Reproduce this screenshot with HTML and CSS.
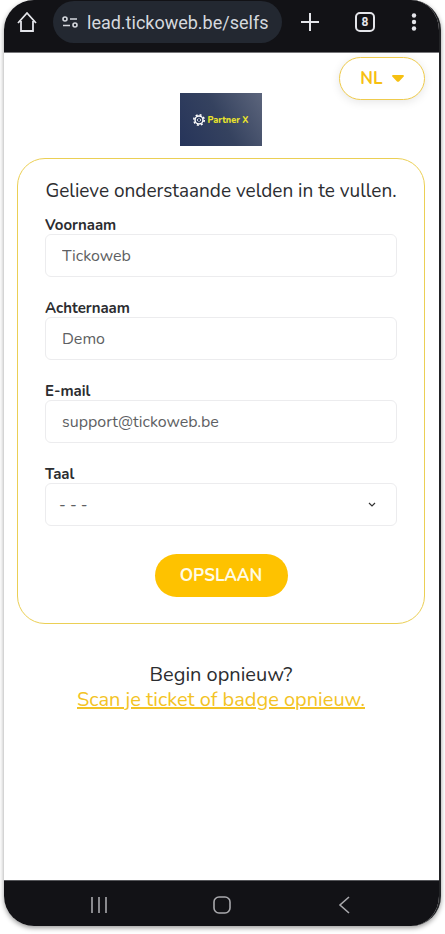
FILE: index.html
```html
<!DOCTYPE html>
<html lang="nl">
<head>
    <meta charset="UTF-8">
    <meta name="viewport" content="width=device-width, initial-scale=1.0">
    <title>Partner X</title>
    <link rel="stylesheet" href="styles.css">
</head>
<body>
    <div class="phone">
        <header class="browser-bar">
            <button type="button" class="icon-button" aria-label="Home">
                <svg width="20" height="22" viewBox="0 0 20 22" fill="none" stroke="#e4e5ea" stroke-width="1.8">
                    <path d="M1 12 L10 2 L19 12 M4 10 V20 H16 V10"/>
                </svg>
            </button>
            <div class="address">
                <svg width="16" height="12" viewBox="0 0 16 12" fill="none" stroke="#d5d8de" stroke-width="1.6">
                    <circle cx="3" cy="3" r="2"/>
                    <path d="M8 3 H15 M1 9.5 H8"/>
                    <circle cx="13" cy="9" r="2"/>
                </svg>
                <input type="text" class="address-input" aria-label="Adres" value="lead.tickoweb.be/selfs">
            </div>
            <div class="browser-actions">
                <button type="button" class="icon-button" aria-label="Nieuw tabblad">
                    <svg width="18" height="18" viewBox="0 0 18 18" stroke="#e4e5ea" stroke-width="2">
                        <path d="M9 0 V18 M0 9 H18"/>
                    </svg>
                </button>
                <button type="button" class="tab-count" aria-label="8 tabbladen">8</button>
                <button type="button" class="icon-button" aria-label="Menu">
                    <svg width="6" height="18" viewBox="0 0 6 18" fill="#e4e5ea">
                        <circle cx="3" cy="2.5" r="2.2"/>
                        <circle cx="3" cy="9" r="2.2"/>
                        <circle cx="3" cy="15.5" r="2.2"/>
                    </svg>
                </button>
            </div>
        </header>

        <main class="page">
            <div class="page-top">
                <div class="logo">
                    <svg width="12" height="12" viewBox="0 0 24 24" fill="none" stroke="#ffffff">
                        <circle cx="12" cy="12" r="8" stroke-width="3"/>
                        <circle cx="12" cy="12" r="10.5" stroke-width="3" stroke-dasharray="4 4.25"/>
                        <path d="M11 9 L8 12 L11 15 M13 9 L16 12 L13 15" stroke-width="1.5"/>
                    </svg>
                    <span>Partner X</span>
                </div>
                <button type="button" class="language">
                    NL
                    <svg width="12" height="7" viewBox="0 0 12 7" fill="#f6c012">
                        <path d="M1 0 H11 Q12.5 0.5 11.5 1.8 L7 6.4 Q6 7.2 5 6.4 L0.5 1.8 Q-0.5 0.5 1 0 Z"/>
                    </svg>
                </button>
            </div>

            <form class="card">
                <h1>Gelieve onderstaande velden in te vullen.</h1>
                <div class="field">
                    <label for="firstname">Voornaam</label>
                    <input type="text" id="firstname" value="Tickoweb">
                </div>
                <div class="field">
                    <label for="lastname">Achternaam</label>
                    <input type="text" id="lastname" value="Demo">
                </div>
                <div class="field">
                    <label for="email">E-mail</label>
                    <input type="email" id="email" value="support@tickoweb.be">
                </div>
                <div class="field">
                    <label for="language">Taal</label>
                    <select id="language">
                        <option>- - -</option>
                    </select>
                </div>
                <button type="submit" class="save">OPSLAAN</button>
            </form>

            <div class="restart">
                <p>Begin opnieuw?</p>
                <a href="#">Scan je ticket of badge opnieuw.</a>
            </div>
        </main>

        <nav class="system-bar">
            <button type="button" class="icon-button" aria-label="Recente apps">
                <svg width="18" height="18" viewBox="0 0 18 18" stroke="#a9a9ad" stroke-width="1.6">
                    <path d="M2 1 V17 M9 1 V17 M16 1 V17"/>
                </svg>
            </button>
            <button type="button" class="icon-button" aria-label="Startscherm">
                <svg width="18" height="18" viewBox="0 0 18 18" fill="none" stroke="#a9a9ad" stroke-width="1.6">
                    <rect x="1" y="1" width="16" height="16" rx="5"/>
                </svg>
            </button>
            <button type="button" class="icon-button" aria-label="Terug">
                <svg width="18" height="18" viewBox="0 0 18 18" fill="none" stroke="#a9a9ad" stroke-width="1.6">
                    <path d="M14 1 L5 9 L14 17"/>
                </svg>
            </button>
        </nav>
    </div>
</body>
</html>
```

FILE: styles.css
```css
* {
    box-sizing: border-box;
}
body {
    margin: 0;
    background: #ffffff;
    color: #2c2d30;
    font-family: Nunito, Lato, sans-serif;
}
button, input, select {
    font-family: inherit;
}
.phone {
    display: flex;
    flex-direction: column;
    min-height: calc(100vh - 8px);
    margin: 0 4px 8px;
    border-right: 2px solid #222326;
    border-radius: 30px;
    overflow: hidden;
    background: #ffffff;
    box-shadow: 0 2px 5px rgba(0, 0, 0, 0.4);
}
.icon-button {
    display: flex;
    align-items: center;
    justify-content: center;
    padding: 0;
    border: none;
    background: none;
    cursor: pointer;
}

/* Browser bar */
.browser-bar {
    display: flex;
    align-items: center;
    gap: 16px;
    height: 53px;
    padding: 1px 22px 9px 13px;
    border-bottom: 1px solid #77777a;
    background: #121216;
}
.address {
    display: flex;
    flex: 1;
    align-items: center;
    gap: 9px;
    min-width: 0;
    height: 42px;
    padding: 0 8px 0 9px;
    border-radius: 21px;
    background: #232831;
}
.address svg {
    flex: none;
}
.address-input {
    flex: 1;
    min-width: 0;
    padding: 0;
    border: none;
    outline: none;
    background: none;
    color: #d5d8de;
    font-family: Roboto, sans-serif;
    font-size: 18px;
}
.browser-actions {
    display: flex;
    align-items: center;
    gap: 36px;
    padding-left: 3px;
}
.tab-count {
    width: 20px;
    height: 20px;
    padding: 0;
    border: 2px solid #e4e5ea;
    border-radius: 5px;
    background: none;
    color: #e4e5ea;
    font-family: Roboto, sans-serif;
    font-size: 12px;
    font-weight: 700;
    line-height: 16px;
}

/* Page */
.page {
    flex: 1;
    padding: 4px 14px 0 13px;
}
.page-top {
    display: grid;
    grid-template-columns: 1fr auto 1fr;
    align-items: start;
}
.logo {
    grid-column: 2;
    display: flex;
    align-items: center;
    justify-content: center;
    gap: 2px;
    width: 82px;
    height: 53px;
    margin-top: 36px;
    background: linear-gradient(60deg, #26345a, #35425f 50%, #5c657c);
    color: #e8e22c;
    font-size: 9px;
    font-weight: 800;
}
.language {
    justify-self: end;
    display: flex;
    align-items: center;
    justify-content: center;
    gap: 9px;
    width: 86px;
    height: 43px;
    padding: 0;
    border: 1px solid #efcb4c;
    border-radius: 22px;
    background: #ffffff;
    box-shadow: 0 2px 10px rgba(0, 0, 0, 0.1);
    color: #f6c012;
    font-size: 17px;
    font-weight: 700;
    cursor: pointer;
}
.card {
    display: flex;
    flex-direction: column;
    margin-top: 12px;
    padding: 20px 27px 26px;
    border: 1px solid #ebcf55;
    border-radius: 28px;
}
h1 {
    margin: 0 -8px 13px;
    font-size: 19px;
    font-weight: 400;
    line-height: 24px;
    text-align: center;
}
.field {
    display: flex;
    flex-direction: column;
    margin-bottom: 22px;
}
.field:last-of-type {
    margin-bottom: 28px;
}
.field label {
    font-size: 15px;
    font-weight: 700;
    line-height: 18px;
}
.field input,
.field select {
    width: 100%;
    height: 43px;
    padding: 0 16px;
    border: 1px solid #ececee;
    border-radius: 6px;
    background: #ffffff;
    color: #5e5f63;
    font-size: 16px;
}
.field select {
    padding: 0 13px;
    appearance: none;
    background: url("data:image/svg+xml,%3Csvg xmlns='http://www.w3.org/2000/svg' width='8' height='6' fill='none' stroke='%23333' stroke-width='1.2'%3E%3Cpath d='M1 1L4 4L7 1'/%3E%3C/svg%3E") no-repeat right 20px center;
}
.save {
    align-self: center;
    width: 133px;
    height: 43px;
    padding: 0;
    border: none;
    border-radius: 22px;
    background: #fec200;
    color: #fffbe6;
    font-size: 17px;
    font-weight: 700;
    cursor: pointer;
}
.restart {
    margin: 38px 0 20px;
    font-size: 20px;
    line-height: 25px;
    text-align: center;
}
.restart p {
    margin: 0;
}
.restart a {
    color: #f3c324;
}

/* System bar */
.system-bar {
    display: flex;
    align-items: center;
    justify-content: space-between;
    height: 46px;
    padding: 2px 86px 0;
    border-top: 1px solid #55565a;
    background: #121216;
}
```
